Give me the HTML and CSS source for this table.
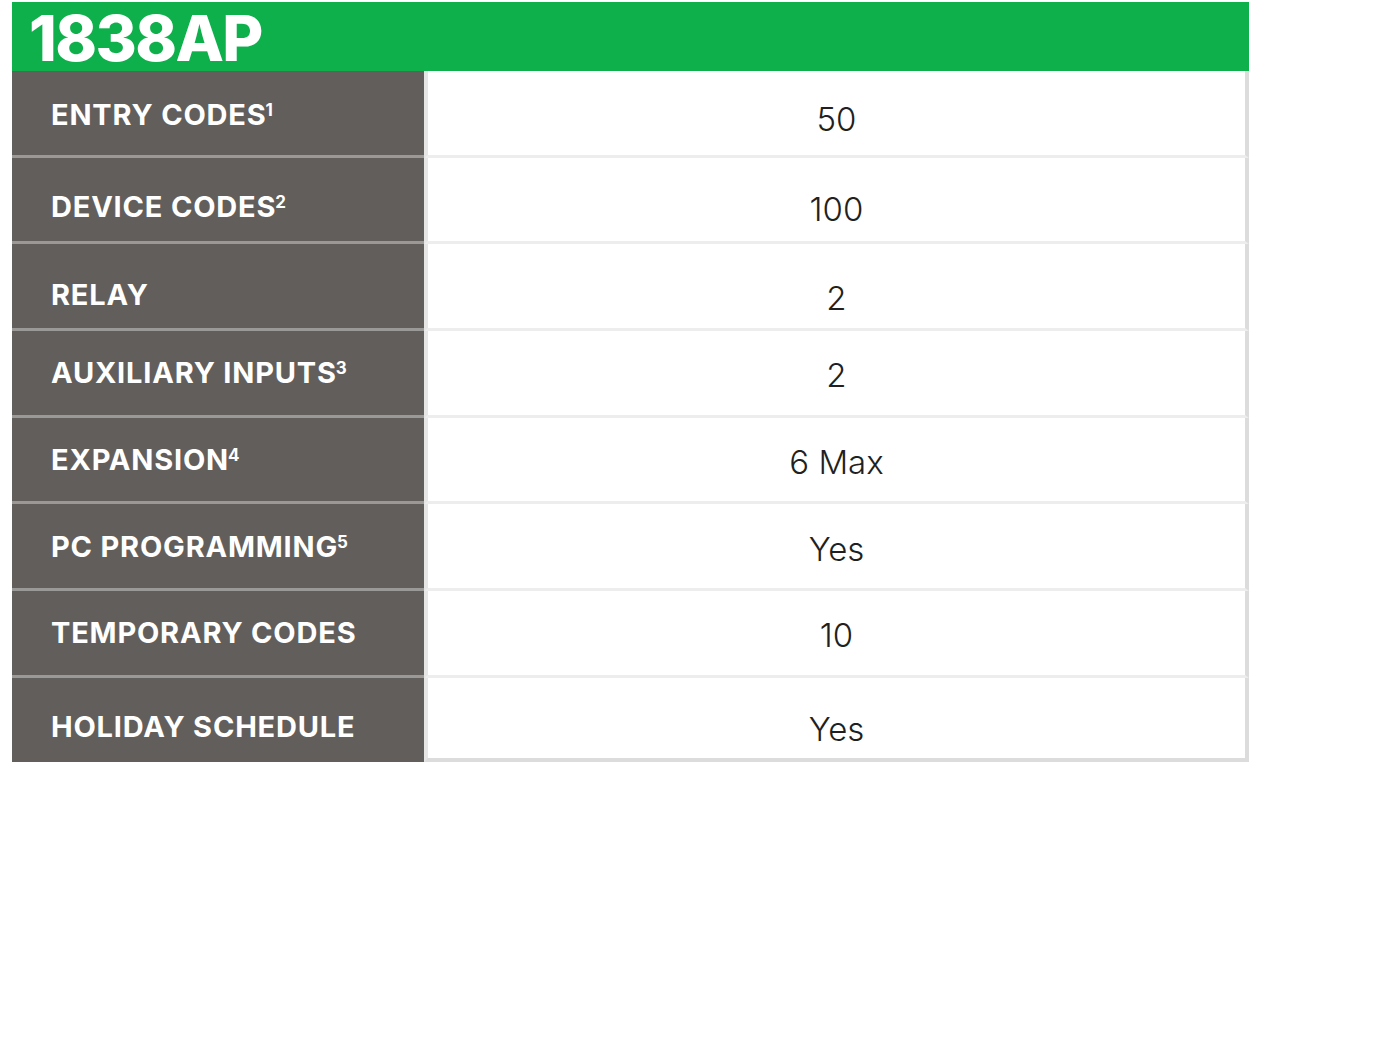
FILE: index.html
```html
<!DOCTYPE html>
<html>
<head>
<meta charset="utf-8">
<link rel="stylesheet" href="styles.css">
</head>
<body>
<div class="sheet">
  <div class="head"><h1 class="title">1838AP</h1></div>
  <div class="rows">
    <div class="row r1"><div class="label">ENTRY CODES<sup>1</sup></div><div class="value">50</div></div>
    <div class="row r2"><div class="label">DEVICE CODES<sup>2</sup></div><div class="value">100</div></div>
    <div class="row r3"><div class="label">RELAY</div><div class="value">2</div></div>
    <div class="row"><div class="label">AUXILIARY INPUTS<sup>3</sup></div><div class="value">2</div></div>
    <div class="row"><div class="label">EXPANSION<sup>4</sup></div><div class="value">6 Max</div></div>
    <div class="row"><div class="label">PC PROGRAMMING<sup>5</sup></div><div class="value">Yes</div></div>
    <div class="row"><div class="label">TEMPORARY CODES</div><div class="value">10</div></div>
    <div class="row last"><div class="label">HOLIDAY SCHEDULE</div><div class="value">Yes</div></div>
  </div>
</div>
</body>
</html>
```
FILE: styles.css
```css
html, body { margin: 0; padding: 0; background: #fff; }
body { font-family: Inter, "Open Sans", "Liberation Sans", sans-serif; }
.sheet { width: 1237px; margin: 2px 0 0 12px; }
.head { height: 69px; background: #0db04b; display: flex; align-items: center; }
.title { margin: 0 0 0 17px; color: #fff; font-family: Inter, sans-serif; font-weight: 800; font-size: 63px; letter-spacing: -1.6px; line-height: 1; padding-top: 4px; }
.rows { display: flex; flex-direction: column; }
.row { display: grid; grid-template-columns: 412px 1fr; height: 86.7px; }
.label { background: #625e5c; color: #fff; font-weight: 700; font-size: 29px; letter-spacing: 0.8px; padding-left: 39px; display: flex; align-items: center; padding-top: 0; border-bottom: 3px solid #9b9898; }
.label sup { font-size: 17px; position: relative; top: -4px; vertical-align: top; margin-left: -1px; letter-spacing: 0; line-height: 1; }
.value { background: #fff; border-left: 4px solid #e6e6e6; border-right: 4px solid #dcdcdc; border-bottom: 3px solid #ededed; display: flex; align-items: center; justify-content: center; padding-top: 5px; font-weight: 300; font-size: 33px; color: #231f20; }
.r1 .label { padding-top: 4px; }
.r1 .value { padding-top: 13px; }
.r2 .label { padding-top: 14px; }
.r2 .value { padding-top: 19px; }
.r3 .label { padding-top: 16px; }
.r3 .value { padding-top: 23px; }
.row.last { height: 84px; }
.row.last .label { border-bottom: none; padding-top: 14px; }
.row.last .value { border-bottom: 4px solid #dcdcdc; padding-top: 23px; }
```
